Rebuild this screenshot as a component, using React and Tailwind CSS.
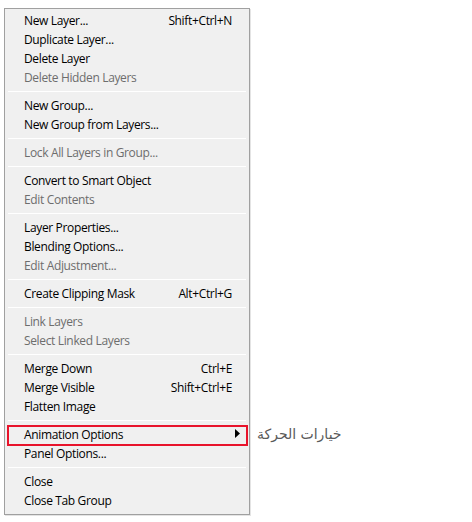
const groups = [
  [
    { label: 'New Layer...', shortcut: 'Shift+Ctrl+N' },
    { label: 'Duplicate Layer...' },
    { label: 'Delete Layer' },
    { label: 'Delete Hidden Layers', disabled: true },
  ],
  [{ label: 'New Group...' }, { label: 'New Group from Layers...' }],
  [{ label: 'Lock All Layers in Group...', disabled: true }],
  [{ label: 'Convert to Smart Object' }, { label: 'Edit Contents', disabled: true }],
  [
    { label: 'Layer Properties...' },
    { label: 'Blending Options...' },
    { label: 'Edit Adjustment...', disabled: true },
  ],
  [{ label: 'Create Clipping Mask', shortcut: 'Alt+Ctrl+G' }],
  [{ label: 'Link Layers', disabled: true }, { label: 'Select Linked Layers', disabled: true }],
  [
    { label: 'Merge Down', shortcut: 'Ctrl+E' },
    { label: 'Merge Visible', shortcut: 'Shift+Ctrl+E' },
    { label: 'Flatten Image' },
  ],
  [{ label: 'Animation Options', submenu: true, callout: 'خيارات الحركة' }, { label: 'Panel Options...' }],
  [{ label: 'Close' }, { label: 'Close Tab Group' }],
];

function MenuRow({ item }) {
  return (
    <div
      className={`relative flex h-[19px] items-center justify-between pl-[19px] pr-[17px] ${
        item.disabled ? 'text-[#6d6d6d]' : 'text-black'
      }`}
    >
      <span>{item.label}</span>
      {item.shortcut && <span>{item.shortcut}</span>}
      {item.submenu && (
        <svg width="5" height="9" viewBox="0 0 5 9" className="mr-[-8px] mt-[-3px]">
          <path d="M0 0 L5 4.5 L0 9 Z" fill="#000" />
        </svg>
      )}
      {item.callout && (
        <>
          <div className="pointer-events-none absolute left-[2px] right-[1px] top-0 bottom-[-2px] border-2 border-[#e8132b]" />
          <span
            dir="rtl"
            className="absolute left-[252px] top-[-1px] whitespace-nowrap text-[14px] tracking-normal text-[#5a5a5a] [font-family:'DejaVu_Sans',sans-serif]"
          >
            {item.callout}
          </span>
        </>
      )}
    </div>
  );
}

export default function App() {
  return (
    <div className="min-h-[522px] bg-white pl-[4px] pt-[8px] text-[12px] tracking-[-0.35px] [font-family:'Open_Sans',sans-serif]">
      <div className="w-[246px] border border-[#a0a0a0] bg-[#f0f0f0] pt-[2px] pb-[4px] shadow-[1px_1px_0_#e4e4e4]">
        {groups.map((group, gi) => (
          <div key={gi}>
            {gi > 0 && <div className="mx-[3px] my-[4px] h-px border-b border-white bg-[#c5c5c5]" />}
            {group.map((item) => (
              <MenuRow key={item.label} item={item} />
            ))}
          </div>
        ))}
      </div>
    </div>
  );
}
